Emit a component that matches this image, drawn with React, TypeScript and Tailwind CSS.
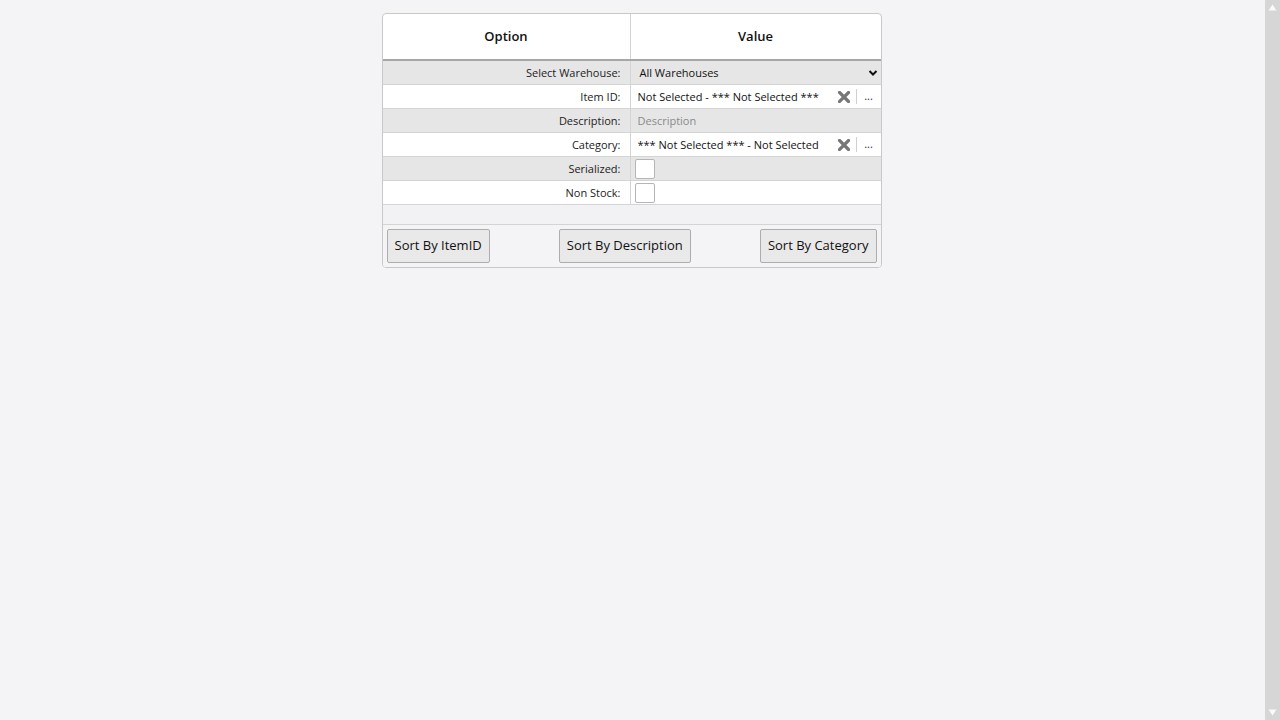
import React from "react";

const font = { fontFamily: '"Open Sans", "Noto Sans", sans-serif' };

function XIcon() {
  return (
    <svg width="12" height="12" viewBox="0 0 12 12" className="shrink-0">
      <path d="M1.5 1.5 L10.5 10.5 M10.5 1.5 L1.5 10.5" stroke="#777" strokeWidth="3.2" strokeLinecap="square" />
    </svg>
  );
}

function LookupInput({ text }: { text: string }) {
  return (
    <div className="flex h-full items-center bg-white pl-[7px]">
      <span className="flex-1 truncate pt-[1px] text-[11px] text-[#111]">{text}</span>
      <div className="flex items-center">
        <XIcon />
        <div className="ml-[6px] h-[15px] w-px bg-[#cfcfcf]" />
        <span className="w-[24px] text-center text-[11px] leading-none text-[#333] pb-[2px]">...</span>
      </div>
    </div>
  );
}

function Checkbox() {
  return <div className="h-[20px] w-[20px] rounded-[2px] border border-[#b5b5b5] bg-white" />;
}

function Row({ label, gray, children }: { label: string; gray?: boolean; children: React.ReactNode }) {
  return (
    <div className={`flex h-[24px] border-b border-[#d4d4d4] ${gray ? "bg-[#e6e6e6]" : "bg-white"}`}>
      <div className="flex w-[248px] items-center justify-end border-r border-[#d4d4d4] pr-[9px] pt-[1px] text-[11px] text-[#222]">
        {label}
      </div>
      <div className="flex-1 h-[23px]">{children}</div>
    </div>
  );
}

function Btn({ children }: { children: React.ReactNode }) {
  return (
    <button className="h-[34px] rounded-[2px] border border-[#adadad] bg-[#e9e9e9] px-[7px] text-[13px] text-[#111]" style={font}>
      {children}
    </button>
  );
}

export default function App() {
  return (
    <div className="flex h-[720px] w-[1280px] bg-[#f4f4f6]" style={font}>
      <div className="flex flex-1 justify-center pt-[13px] pr-[2px]">
        <div className="h-fit w-[500px] overflow-hidden rounded-[4px] border border-[#c8c8c8] bg-white">
          <div className="flex h-[47px] border-b-2 border-[#a6a6a6]">
            <div className="flex w-[248px] items-center justify-center border-r border-[#d4d4d4] text-[13px] font-semibold text-[#111]">
              Option
            </div>
            <div className="flex flex-1 items-center justify-center text-[13px] font-semibold text-[#111]">Value</div>
          </div>
          <Row label="Select Warehouse:" gray>
            <div className="flex h-full items-center justify-between pl-[9px] pr-[3px] text-[11px] text-[#111]">
              <span className="pt-[2px]">All Warehouses</span>
              <svg width="10" height="8" viewBox="0 0 10 8">
                <path d="M1.5 2 L5 5.5 L8.5 2" stroke="#111" strokeWidth="2" fill="none" />
              </svg>
            </div>
          </Row>
          <Row label="Item ID:">
            <LookupInput text="Not Selected - *** Not Selected ***" />
          </Row>
          <Row label="Description:" gray>
            <div className="flex h-full items-center pl-[7px] pt-[1px] text-[11px] text-[#8a8a8a]">Description</div>
          </Row>
          <Row label="Category:">
            <LookupInput text="*** Not Selected *** - Not Selected" />
          </Row>
          <Row label="Serialized:" gray>
            <div className="flex h-full items-center pl-[4px]">
              <Checkbox />
            </div>
          </Row>
          <Row label="Non Stock:">
            <div className="flex h-full items-center pl-[4px]">
              <Checkbox />
            </div>
          </Row>
          <div className="h-[20px] border-b border-[#d4d4d4] bg-[#f2f2f4]" />
          <div className="flex h-[42px] items-center justify-between bg-[#f4f4f6] px-[4px]">
            <Btn>Sort By ItemID</Btn>
            <Btn>Sort By Description</Btn>
            <Btn>Sort By Category</Btn>
          </div>
        </div>
      </div>
      <div className="flex w-[15px] flex-col items-center justify-between bg-[#d6d6d6] py-[4px]">
        <svg width="9" height="7" viewBox="0 0 9 7">
          <path d="M4.5 0.5 L8.5 6.5 L0.5 6.5 Z" fill="#fafafa" />
        </svg>
        <svg width="9" height="7" viewBox="0 0 9 7">
          <path d="M0.5 0.5 L8.5 0.5 L4.5 6.5 Z" fill="#fafafa" />
        </svg>
      </div>
    </div>
  );
}
